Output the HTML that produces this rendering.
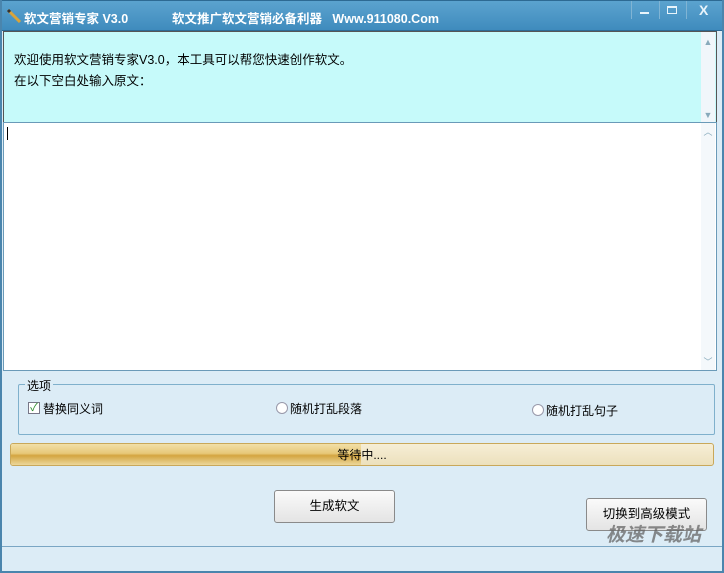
<!DOCTYPE html>
<html><head><meta charset="utf-8"><style>
*{margin:0;padding:0;box-sizing:border-box}
body{width:724px;height:573px;position:relative;overflow:hidden;background:#dcecf6;font-family:"Liberation Sans","Noto Sans CJK SC",sans-serif;font-size:12px;color:#000}
.abs{position:absolute}
#title{left:0;top:0;width:724px;height:31px;background:linear-gradient(#5ba3cf,#3f8bbd);border:1px solid #2d6a93}
#title .t{color:#fff;font-weight:bold;font-size:12.5px;top:7px;white-space:pre}
#top{left:3px;top:31px;width:714px;height:92px;background:#c6fafa;border:1px solid #555;border-bottom:1px solid #7aa;}
#top p{position:absolute;left:10px;font-size:12.5px}
#ta{left:3px;top:122px;width:714px;height:249px;background:#fff;border:1px solid #6a9ab8}
.sb{position:absolute;right:1px;width:14px;background:#f0f6fa;color:#8ab;font-size:9px;text-align:center}
#grp{left:18px;top:384px;width:697px;height:51px;border:1px solid #7fb0cc;border-radius:2px}
#prog{left:10px;top:443px;width:704px;height:23px;border:1px solid #c9a85a;border-radius:3px;background:linear-gradient(#f6eed6,#ece0bc);overflow:hidden}
#prog .f{position:absolute;left:0;top:0;width:350px;height:100%;background:linear-gradient(#f2dfa8 0%,#e7c878 45%,#d4a540 55%,#ecd79a 100%)}
.btn{position:absolute;border:1px solid #8a8a8a;border-radius:3px;background:linear-gradient(#fafafa,#e4e4e4);text-align:center;font-size:12.5px}
</style></head><body>
<div id="title" class="abs">
 <svg class="abs" style="left:5px;top:7px" width="16" height="16"><line x1="2" y1="2" x2="14" y2="14" stroke="#d9a43a" stroke-width="3"/><line x1="2" y1="2" x2="4" y2="4" stroke="#333" stroke-width="3"/></svg>
 <div class="abs t" style="left:23px">软文营销专家 V3.0</div>
 <div class="abs t" style="left:171px">软文推广软文营销必备利器   Www.911080.Com</div>
 <div class="abs" style="left:630px;top:0;width:28px;height:18px;border-left:1px solid #80b4d4"></div>
 <div class="abs" style="left:658px;top:0;width:28px;height:18px;border-left:1px solid #80b4d4;border-right:1px solid #80b4d4"></div>
 <div class="abs" style="left:639px;top:11px;width:9px;height:2px;background:#e8f4fb"></div>
 <div class="abs" style="left:666px;top:5px;width:10px;height:8px;border:1px solid #e8f4fb;border-top-width:2px"></div>
 <div class="abs" style="left:698px;top:1px;color:#e8f4fb;font-size:14px;font-weight:bold">X</div>
</div>
<div id="top" class="abs">
 <p style="top:17px">欢迎使用软文营销专家V3.0，本工具可以帮您快速创作软文。</p>
 <p style="top:38px">在以下空白处输入原文：</p>
 <div class="sb" style="top:0;height:90px;"><div style="margin-top:5px">▲</div><div style="position:absolute;bottom:2px;width:100%">▼</div></div>
</div>
<div id="ta" class="abs">
 <div class="abs" style="left:3px;top:4px;width:1px;height:13px;background:#000"></div>
 <div class="sb" style="top:0;height:247px;background:#f4f8fb"><div style="margin-top:2px">︿</div><div style="position:absolute;bottom:2px;width:100%">﹀</div></div>
</div>
<div id="grp" class="abs"></div>
<div class="abs" style="left:25px;top:377px;background:#dcecf6;padding:0 2px">选项</div>
<div class="abs" style="left:28px;top:402px;width:12px;height:12px;border:1px solid #778;background:#fff;color:#2a8a2a;font-size:11px;line-height:10px;text-align:center">✓</div>
<div class="abs" style="left:43px;top:400px">替换同义词</div>
<div class="abs" style="left:276px;top:402px;width:12px;height:12px;border:1px solid #99a;border-radius:50%;background:#fff"></div>
<div class="abs" style="left:290px;top:400px">随机打乱段落</div>
<div class="abs" style="left:532px;top:404px;width:12px;height:12px;border:1px solid #99a;border-radius:50%;background:#fff"></div>
<div class="abs" style="left:546px;top:402px">随机打乱句子</div>
<div id="prog" class="abs"><div class="f"></div><div class="abs" style="left:0;width:100%;top:2px;text-align:center">等待中....</div></div>
<div class="btn" style="left:274px;top:490px;width:121px;height:33px;line-height:31px">生成软文</div>
<div class="btn" style="left:586px;top:498px;width:121px;height:33px;line-height:31px">切换到高级模式</div>
<div class="abs" style="left:606px;top:520px;color:#666;font-weight:bold;font-style:italic;font-size:19px;opacity:.75">极速下载站</div>
<div class="abs" style="left:0;top:546px;width:724px;height:1px;background:#7aa6c4"></div>
<div class="abs" style="left:0;top:0;width:2px;height:573px;background:#4a85ad"></div>
<div class="abs" style="left:722px;top:0;width:2px;height:573px;background:#4a85ad"></div>
<div class="abs" style="left:0;top:571px;width:724px;height:2px;background:#4a85ad"></div>
</body></html>
